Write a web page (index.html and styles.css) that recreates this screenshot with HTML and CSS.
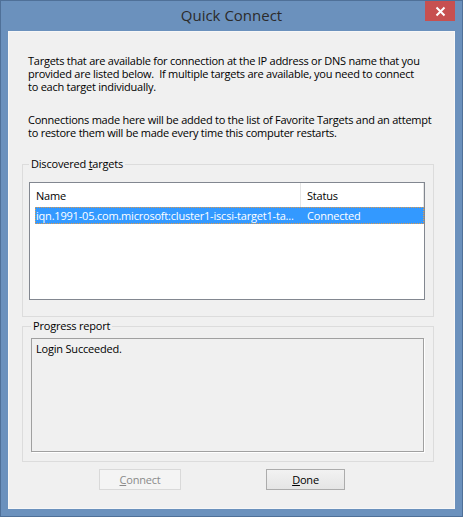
FILE: index.html
```html
<!DOCTYPE html>
<html>
<head>
<meta charset="utf-8">
<title>Quick Connect</title>
<link rel="stylesheet" href="styles.css">
</head>
<body>
<div class="window">
  <div class="titlebar">
    <span class="spacer"></span>
    <div class="title">Quick Connect</div>
    <button class="close" aria-label="Close">
      <svg width="30" height="20" viewBox="0 0 30 20"><path d="M11.5 6.5 L19.5 14.5 M19.5 6.5 L11.5 14.5" stroke="#fff" stroke-width="2" fill="none"/></svg>
    </button>
  </div>
  <div class="client">
    <p class="intro">Targets that are available for connection at the IP address or DNS name that you<br>provided are listed below.&nbsp; If multiple targets are available, you need to connect<br>to each target individually.</p>
    <p class="intro second">Connections made here will be added to the list of Favorite Targets and an attempt<br>to restore them will be made every time this computer restarts.</p>

    <fieldset class="group discovered">
      <legend>Discovered <u>t</u>argets</legend>
      <div class="listview">
        <div class="lv-header">
          <div class="col-name">Name</div>
          <div class="col-status">Status</div>
          <div class="col-rest"></div>
        </div>
        <div class="lv-row selected">
          <div class="col-name">iqn.1991-05.com.microsoft:cluster1-iscsi-target1-ta...</div>
          <div class="col-status">Connected</div>
        </div>
      </div>
    </fieldset>

    <fieldset class="group progress">
      <legend>Progress report</legend>
      <div class="log">Login Succeeded.</div>
    </fieldset>

    <div class="buttons">
      <button class="btn connect" disabled><u>C</u>onnect</button>
      <button class="btn done"><u>D</u>one</button>
    </div>
  </div>
</div>
</body>
</html>
```

FILE: styles.css
```css
html, body {
  margin: 0;
  padding: 0;
  background: #6b91bd;
}

.window {
  width: 463px;
  height: 517px;
  box-sizing: border-box;
  border: 1px solid #4f7098;
  background: #6b91bd;
  display: flex;
  flex-direction: column;
  font-family: "Open Sans", "Noto Sans", sans-serif;
  font-size: 11px;
  color: #000;
}

.titlebar {
  height: 30px;
  flex: none;
  display: grid;
  grid-template-columns: 1fr auto 1fr;
}

.title {
  align-self: center;
  font-size: 15px;
  line-height: 20px;
  color: #2b2b2b;
  padding-bottom: 3px;
}

.close {
  justify-self: end;
  align-self: start;
  width: 30px;
  height: 20px;
  margin: 0 7px 0 0;
  padding: 0;
  border: none;
  background: #c75050;
  display: block;
}
.close svg { display: block; }

.client {
  flex: 1;
  margin: 0 7px 7px 7px;
  background: #f0f0f0;
  border: 1px solid #f7f7f7;
  padding: 22px 20px 0 13px;
  display: flex;
  flex-direction: column;
}

.intro {
  margin: 0;
  padding-left: 6px;
  line-height: 13px;
  letter-spacing: -0.25px;
  white-space: nowrap;
}
.intro.second { margin-top: 20px; }

.group {
  margin: 0;
  border: 1px solid #dcdcdc;
  min-width: 0;
}
.group legend {
  padding: 0 2px;
  line-height: 14px;
  letter-spacing: -0.2px;
}

.discovered {
  margin-top: 18px;
  padding: 11px 8px 16px 6px;
}

.listview {
  height: 118px;
  box-sizing: border-box;
  border: 1px solid #828790;
  background: #fff;
  overflow: hidden;
}

.lv-header {
  height: 24px;
  display: flex;
  align-items: stretch;
  background: #fff;
}
.lv-header > div {
  display: flex;
  align-items: center;
  padding-left: 6px;
  box-sizing: border-box;
  letter-spacing: -0.2px;
}
.lv-header .col-name {
  width: 271px;
  border-right: 1px solid #e5e5e5;
}
.lv-header .col-status {
  width: 123px;
  border-right: 1px solid #e5e5e5;
}
.lv-header .col-rest { flex: 1; padding: 0; }

.lv-row {
  height: 17px;
  margin-left: 5px;
  display: flex;
  align-items: center;
  box-sizing: border-box;
  letter-spacing: -0.2px;
}
.lv-row.selected {
  background: #3399ff;
  color: #fff;
  outline: 1px dotted #e09a4a;
  outline-offset: -1px;
}
.lv-row .col-name {
  width: 266px;
  padding-left: 1px;
  box-sizing: border-box;
  white-space: nowrap;
  overflow: hidden;
}
.lv-row .col-status {
  padding-left: 6px;
}

.progress {
  margin-top: 2px;
  padding: 5px 9px 9px 8px;
}

.log {
  height: 114px;
  box-sizing: border-box;
  border: 1px solid #a0a0a0;
  box-shadow: 1px 1px 0 #fff;
  background: #f0f0f0;
  padding: 3px 4px;
  line-height: 13px;
  letter-spacing: -0.2px;
}

.buttons {
  margin-top: 7px;
  display: flex;
  gap: 85px;
  padding-left: 77px;
}

.btn {
  height: 21px;
  box-sizing: border-box;
  font-family: inherit;
  font-size: 11px;
  letter-spacing: -0.2px;
  padding: 0;
  line-height: 19px;
}
.btn.connect {
  width: 82px;
  border: 1px solid #d9d9d9;
  background: #f4f4f4;
  color: #8a8a8a;
}
.btn.done {
  width: 79px;
  border: 1px solid #acacac;
  background: linear-gradient(#f2f2f2, #e5e5e5);
  color: #000;
}
```
